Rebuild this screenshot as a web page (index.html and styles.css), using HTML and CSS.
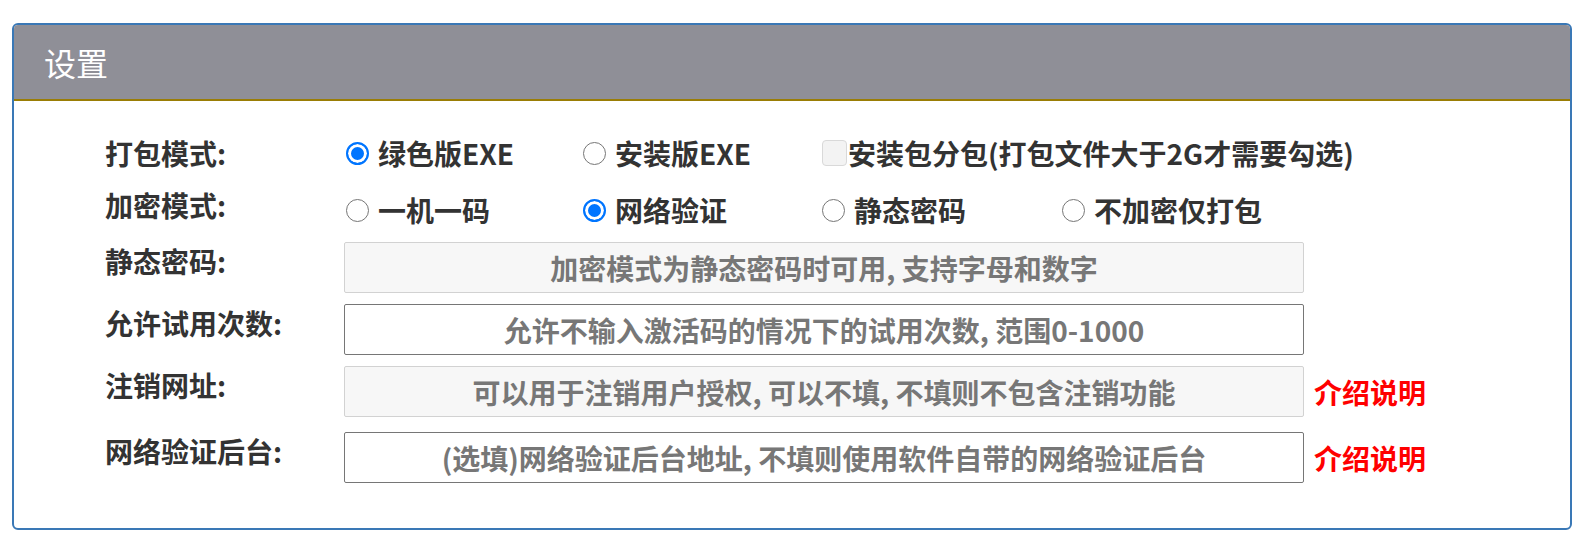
FILE: index.html
```html
<!DOCTYPE html>
<html lang="zh-CN">
<head>
<meta charset="utf-8">
<title>设置</title>
<link rel="stylesheet" href="styles.css">
</head>
<body>
<section class="panel">
  <header class="panel-head">
    <h2 class="panel-title">设置</h2>
  </header>
  <div class="panel-body">
    <div class="row row-choice">
      <label class="label">打包模式:</label>
      <div class="options">
        <label class="opt"><input type="radio" name="pack" class="radio" checked><span>绿色版EXE</span></label>
        <label class="opt"><input type="radio" name="pack" class="radio"><span>安装版EXE</span></label>
        <label class="opt opt-check"><input type="checkbox" class="check"><span>安装包分包(打包文件大于2G才需要勾选)</span></label>
      </div>
    </div>
    <div class="row row-choice row-second">
      <label class="label">加密模式:</label>
      <div class="options options-low">
        <label class="opt"><input type="radio" name="enc" class="radio"><span>一机一码</span></label>
        <label class="opt"><input type="radio" name="enc" class="radio" checked><span>网络验证</span></label>
        <label class="opt"><input type="radio" name="enc" class="radio"><span>静态密码</span></label>
        <label class="opt"><input type="radio" name="enc" class="radio"><span>不加密仅打包</span></label>
      </div>
    </div>
    <div class="row row-input row-first-input">
      <label class="label label-input">静态密码:</label>
      <input class="field" type="text" disabled placeholder="加密模式为静态密码时可用, 支持字母和数字">
    </div>
    <div class="row row-input">
      <label class="label label-input">允许试用次数:</label>
      <input class="field" type="text" placeholder="允许不输入激活码的情况下的试用次数, 范围0-1000">
    </div>
    <div class="row row-input">
      <label class="label label-input">注销网址:</label>
      <input class="field" type="text" disabled placeholder="可以用于注销用户授权, 可以不填, 不填则不包含注销功能">
      <a class="help" href="#">介绍说明</a>
    </div>
    <div class="row row-input row-last">
      <label class="label label-input">网络验证后台:</label>
      <input class="field" type="text" placeholder="(选填)网络验证后台地址, 不填则使用软件自带的网络验证后台">
      <a class="help" href="#">介绍说明</a>
    </div>
  </div>
</section>
</body>
</html>
```

FILE: styles.css
```css
* { box-sizing: border-box; }

html, body {
  margin: 0;
  padding: 0;
  background: #ffffff;
}

body {
  font-family: "Noto Sans CJK SC", "Noto Sans", sans-serif;
  color: #333333;
  padding: 23px 24px 16px 12px;
}

.panel {
  border: 2px solid #3a78b6;
  border-radius: 6px;
  overflow: hidden;
  background: #ffffff;
}

.panel-head {
  height: 76px;
  background: #8f8f97;
  border-bottom: 2px solid #9a7d05;
  display: flex;
  align-items: center;
  padding-left: 30px;
}

.panel-title {
  margin: 0;
  font-size: 32px;
  font-weight: 400;
  color: #ffffff;
  line-height: 1;
}

.panel-body {
  padding: 35px 0 45px 91px;
}

.row {
  display: flex;
  align-items: flex-start;
}

.label {
  width: 239px;
  flex: none;
  font-size: 28px;
  font-weight: 700;
  line-height: 34px;
  color: #333333;
}

.row-second { margin-top: 18px; }
.row-first-input { margin-top: 15px; }
.row-input + .row-input { margin-top: 11px; }
.row-input.row-last { margin-top: 15px; }

.options {
  display: grid;
  grid-template-columns: 237px 239px 240px auto;
  align-items: center;
}

.options-low { margin-top: 5px; }

.opt {
  display: flex;
  align-items: center;
  font-size: 28px;
  font-weight: 700;
  line-height: 34px;
  color: #333333;
  white-space: nowrap;
}

.radio {
  appearance: none;
  -webkit-appearance: none;
  width: 23px;
  height: 23px;
  margin: 0 9px 0 2px;
  border: 1px solid #767676;
  border-radius: 50%;
  background: #ffffff;
  flex: none;
}

.radio:checked {
  border: 2px solid #0075ff;
  background: #0075ff;
  box-shadow: inset 0 0 0 3px #ffffff;
}

.check {
  appearance: none;
  -webkit-appearance: none;
  width: 25px;
  height: 26px;
  margin: 0 1px 0 2px;
  border: 1px solid #d9d9d9;
  border-radius: 4px;
  background: #f3f3f3;
  flex: none;
}

.label-input { padding-top: 2px; }

.row-input { align-items: flex-start; }

.field {
  width: 960px;
  height: 51px;
  flex: none;
  border: 1px solid #767676;
  border-radius: 2px;
  background: #ffffff;
  font-family: "Noto Sans CJK SC", "Noto Sans", sans-serif;
  font-size: 28px;
  font-weight: 700;
  color: #777777;
  text-align: center;
  padding: 0 8px;
  margin: 0;
}

.field::placeholder {
  color: #777777;
  opacity: 1;
}

.field:disabled {
  background: #f7f7f7;
  border-color: #d2d2d2;
}

.help {
  align-self: center;
  margin-left: 10px;
  font-size: 28px;
  font-weight: 700;
  line-height: 34px;
  color: #ff0000;
  text-decoration: none;
  white-space: nowrap;
}
```
